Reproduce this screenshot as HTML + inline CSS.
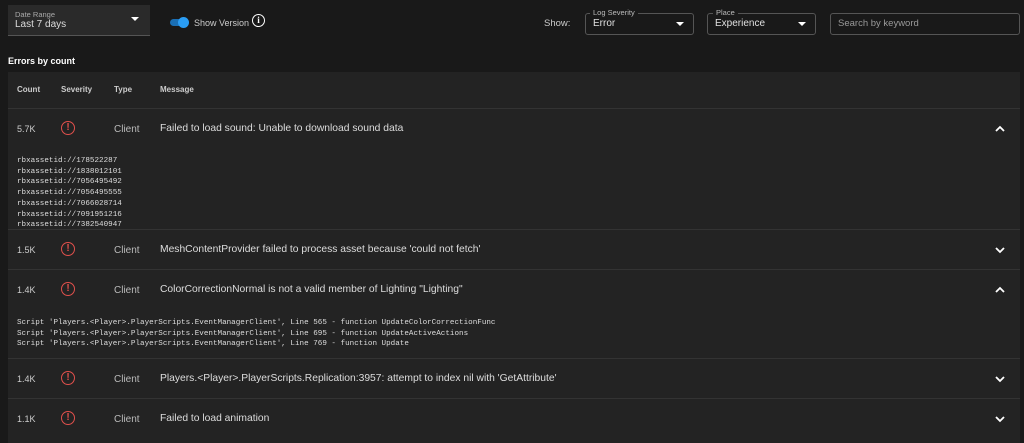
<!DOCTYPE html><html><head><style>
body{margin:0;background:#191919;width:1024px;height:443px;overflow:hidden;font-family:"Liberation Sans",sans-serif;color:#e0e0e0;position:relative}
.a{position:absolute}
.sel{border:1px solid #555;border-radius:3px;box-sizing:border-box}
.lbl{font-size:7.5px;color:#bbb;background:#191919;padding:0 3px}
.tri{width:0;height:0;border-left:4px solid transparent;border-right:4px solid transparent;border-top:4px solid #fff}
.tbl{left:8px;top:72px;width:1012px;height:371px;background:#232323}
.row{position:absolute;left:0;width:1012px;height:40px;border-top:1px solid #333;font-size:10px}
.row span{position:absolute;top:15px}
.c1{left:9px;color:#ccc;font-size:9px}
.c3{left:106px;color:#bbb}
.c4{left:152px;font-size:10.3px;color:#ddd;top:14px!important}
.ic{position:absolute;left:53px;top:12px;width:12px;height:12px;border:1.5px solid #e0504c;border-radius:50%;color:#e0504c;font-size:10px;font-weight:bold;text-align:center;line-height:12px}
.ch{position:absolute;left:986px;top:16px}
.code{position:absolute;left:9px;font-family:"Liberation Mono",monospace;font-size:7.6px;color:#ddd;line-height:10.7px;white-space:pre}
</style></head><body>
<div class="a" style="left:8px;top:5px;width:142px;height:30px;background:#2a2a2a;border-bottom:1px solid #555"></div>
<div class="a" style="left:15px;top:10px;font-size:7.5px;color:#aaa">Date Range</div>
<div class="a" style="left:15px;top:19px;font-size:10px;color:#ddd">Last 7 days</div>
<div class="a tri" style="left:131px;top:17px"></div>
<div class="a" style="left:170px;top:19px;width:18px;height:7px;border-radius:4px;background:#1a6fb5"></div>
<div class="a" style="left:178px;top:17px;width:11px;height:11px;border-radius:50%;background:#2a9df4"></div>
<div class="a" style="left:194px;top:18px;font-size:9px;color:#ccc">Show Version</div>
<div class="a" style="left:252px;top:14px;width:11px;height:11px;border:1.5px solid #fff;border-radius:50%;font-size:9px;font-weight:bold;text-align:center;line-height:11px;color:#fff;font-family:'Liberation Serif',serif">i</div>
<div class="a" style="left:544px;top:18px;font-size:9.5px;color:#ccc">Show:</div>
<div class="a sel" style="left:585px;top:13px;width:109px;height:22px"></div>
<div class="a lbl" style="left:590px;top:8px">Log Severity</div>
<div class="a" style="left:593px;top:18px;font-size:10px">Error</div>
<div class="a tri" style="left:676px;top:22px"></div>
<div class="a sel" style="left:707px;top:13px;width:109px;height:22px"></div>
<div class="a lbl" style="left:713px;top:8px">Place</div>
<div class="a" style="left:715px;top:18px;font-size:10px">Experience</div>
<div class="a tri" style="left:798px;top:22px"></div>
<div class="a sel" style="left:830px;top:13px;width:190px;height:22px"></div>
<div class="a" style="left:838px;top:18px;font-size:9.5px;color:#999">Search by keyword</div>
<div class="a" style="left:8px;top:56px;font-size:9px;font-weight:bold;color:#fff">Errors by count</div>
<div class="a tbl">
<div style="position:absolute;top:13px;font-size:8px;font-weight:bold;color:#ccc;left:9px">Count</div>
<div style="position:absolute;top:13px;font-size:8px;font-weight:bold;color:#ccc;left:53px">Severity</div>
<div style="position:absolute;top:13px;font-size:8px;font-weight:bold;color:#ccc;left:106px">Type</div>
<div style="position:absolute;top:13px;font-size:8px;font-weight:bold;color:#ccc;left:152px">Message</div>
<div class="row" style="top:36px"><span class="c1">5.7K</span><div class="ic">!</div><span class="c3">Client</span><span class="c4">Failed to load sound: Unable to download sound data</span><svg class="ch" width="12" height="8"><path d="M2 6L6 2L10 6" stroke="#fff" stroke-width="1.8" fill="none"/></svg></div>
<div class="code" style="top:84px">rbxassetid://178522287
rbxassetid://1838012101
rbxassetid://7056495492
rbxassetid://7056495555
rbxassetid://7066028714
rbxassetid://7091951216
rbxassetid://7382540947</div>
<div class="row" style="top:157px;background:#232323"><span class="c1">1.5K</span><div class="ic">!</div><span class="c3">Client</span><span class="c4">MeshContentProvider failed to process asset because 'could not fetch'</span><svg class="ch" width="12" height="8"><path d="M2 2L6 6L10 2" stroke="#fff" stroke-width="1.8" fill="none"/></svg></div>
<div class="row" style="top:197px"><span class="c1">1.4K</span><div class="ic">!</div><span class="c3">Client</span><span class="c4">ColorCorrectionNormal is not a valid member of Lighting "Lighting"</span><svg class="ch" width="12" height="8"><path d="M2 6L6 2L10 6" stroke="#fff" stroke-width="1.8" fill="none"/></svg></div>
<div class="code" style="top:246px">Script 'Players.&lt;Player&gt;.PlayerScripts.EventManagerClient', Line 565 - function UpdateColorCorrectionFunc
Script 'Players.&lt;Player&gt;.PlayerScripts.EventManagerClient', Line 695 - function UpdateActiveActions
Script 'Players.&lt;Player&gt;.PlayerScripts.EventManagerClient', Line 769 - function Update</div>
<div class="row" style="top:286px"><span class="c1">1.4K</span><div class="ic">!</div><span class="c3">Client</span><span class="c4">Players.&lt;Player&gt;.PlayerScripts.Replication:3957: attempt to index nil with 'GetAttribute'</span><svg class="ch" width="12" height="8"><path d="M2 2L6 6L10 2" stroke="#fff" stroke-width="1.8" fill="none"/></svg></div>
<div class="row" style="top:326px"><span class="c1">1.1K</span><div class="ic">!</div><span class="c3">Client</span><span class="c4">Failed to load animation</span><svg class="ch" width="12" height="8"><path d="M2 2L6 6L10 2" stroke="#fff" stroke-width="1.8" fill="none"/></svg></div>
</div>
</body></html>
